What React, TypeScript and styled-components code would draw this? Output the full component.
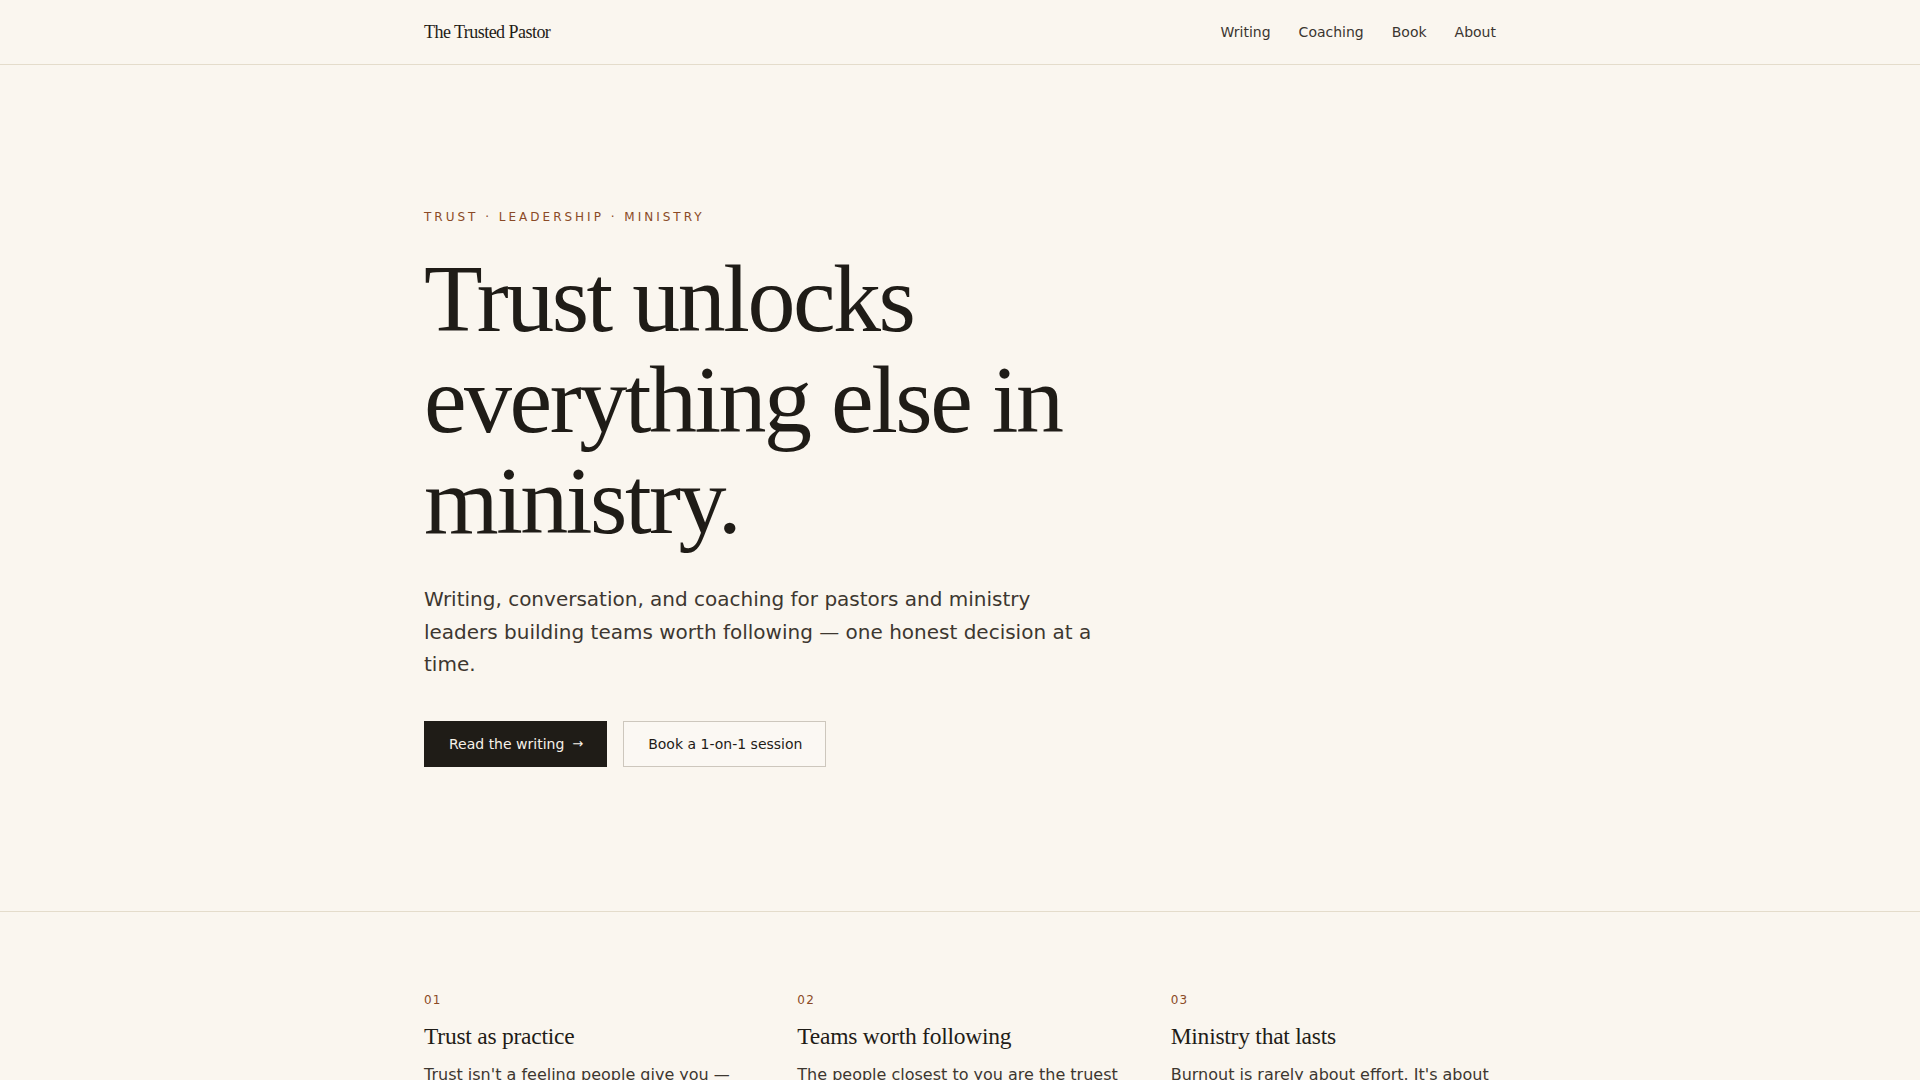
import * as React from 'react';
import styled, { createGlobalStyle } from 'styled-components';

const GlobalStyle = createGlobalStyle`
  * { box-sizing: border-box; }
  html, body { margin: 0; padding: 0; }
  body {
    background: #faf6ef;
    color: #1f1c17;
    font-family: 'DejaVu Sans', sans-serif;
  }
`;

const pillars = [
  {
    num: '01',
    title: 'Trust as practice',
    body: "Trust isn't a feeling people give you — it's a habit you build, one kept promise and one honest conversation at a time.",
  },
  {
    num: '02',
    title: 'Teams worth following',
    body: 'The people closest to you are the truest measure of your leadership. Build a staff and a board that tell each other the truth.',
  },
  {
    num: '03',
    title: 'Ministry that lasts',
    body: "Burnout is rarely about effort. It's about carrying weight alone that was meant to be shared with people you trust.",
  },
];

export default function App() {
  return (
    <>
      <GlobalStyle />
      <Header>
        <Container>
          <HeaderRow>
            <Logo href="#">The Trusted Pastor</Logo>
            <Nav>
              <NavLink href="#">Writing</NavLink>
              <NavLink href="#">Coaching</NavLink>
              <NavLink href="#">Book</NavLink>
              <NavLink href="#">About</NavLink>
            </Nav>
          </HeaderRow>
        </Container>
      </Header>

      <Hero>
        <Container>
          <Eyebrow>Trust · Leadership · Ministry</Eyebrow>
          <Headline>
            Trust unlocks everything else in ministry.
          </Headline>
          <Lede>
            Writing, conversation, and coaching for pastors and ministry
            leaders building teams worth following — one honest decision at a
            time.
          </Lede>
          <Actions>
            <Button $variant="solid" href="#">
              Read the writing <Arrow>→</Arrow>
            </Button>
            <Button $variant="outline" href="#">
              Book a 1-on-1 session
            </Button>
          </Actions>
        </Container>
      </Hero>

      <Pillars>
        <Container>
          <PillarGrid>
            {pillars.map(p => (
              <Pillar key={p.num}>
                <PillarNum>{p.num}</PillarNum>
                <PillarTitle>{p.title}</PillarTitle>
                <PillarBody>{p.body}</PillarBody>
              </Pillar>
            ))}
          </PillarGrid>
        </Container>
      </Pillars>
    </>
  );
}

const Container = styled.div`
  max-width: 1120px;
  margin: 0 auto;
  padding: 0 24px;
`;

const Header = styled.header`
  border-bottom: 1px solid #e4dccb;
`;

const HeaderRow = styled.div`
  height: 64px;
  display: flex;
  align-items: center;
  justify-content: space-between;
`;

const Logo = styled.a`
  font-family: 'Liberation Serif', serif;
  font-size: 18px;
  letter-spacing: -0.03em;
  color: #1f1c17;
  text-decoration: none;
`;

const Nav = styled.nav`
  display: flex;
  align-items: center;
  gap: 28px;
`;

const NavLink = styled.a`
  font-size: 14px;
  color: #3a352f;
  text-decoration: none;
`;

const Hero = styled.section`
  padding: 143px 0 144px;
  border-bottom: 1px solid #e4dccb;
`;

const Eyebrow = styled.div`
  font-size: 12px;
  line-height: 18px;
  letter-spacing: 0.25em;
  text-transform: uppercase;
  color: #8a4a26;
  margin-bottom: 23px;
`;

const Headline = styled.h1`
  margin: 0;
  max-width: 720px;
  font-family: 'Liberation Serif', serif;
  font-weight: 400;
  font-size: 96px;
  line-height: 1.05;
  letter-spacing: -0.026em;
  color: #1f1c17;
`;

const Lede = styled.p`
  margin: 32px 0 0;
  max-width: 680px;
  font-size: 20px;
  line-height: 32.5px;
  color: #3d3730;
`;

const Actions = styled.div`
  display: flex;
  gap: 16px;
  margin-top: 40px;
`;

const Button = styled.a<{ $variant: 'solid' | 'outline' }>`
  display: inline-flex;
  align-items: center;
  gap: 8px;
  height: 46px;
  padding: 0 23px 0 24px;
  font-size: 14px;
  text-decoration: none;
  border: 1px solid ${p => (p.$variant === 'solid' ? '#1f1c17' : '#cdc7bd')};
  background: ${p => (p.$variant === 'solid' ? '#1f1c17' : '#fbf8f3')};
  color: ${p => (p.$variant === 'solid' ? '#f6f1e8' : '#1f1c17')};
`;

const Arrow = styled.span`
  font-size: 13px;
`;

const Pillars = styled.section`
  padding: 79px 0 96px;
`;

const PillarGrid = styled.div`
  display: grid;
  grid-template-columns: repeat(3, 1fr);
  gap: 48px;
`;

const Pillar = styled.div`
  display: flex;
  flex-direction: column;
`;

const PillarNum = styled.div`
  font-size: 12px;
  line-height: 18px;
  letter-spacing: 0.1em;
  color: #8a4a26;
`;

const PillarTitle = styled.h3`
  margin: 12px 0 0;
  font-family: 'Liberation Serif', serif;
  font-weight: 400;
  font-size: 23.5px;
  line-height: 1.3;
  letter-spacing: -0.01em;
  color: #1f1c17;
`;

const PillarBody = styled.p`
  margin: 10px 0 0;
  font-size: 16px;
  line-height: 1.7;
  color: #3d3730;
`;
